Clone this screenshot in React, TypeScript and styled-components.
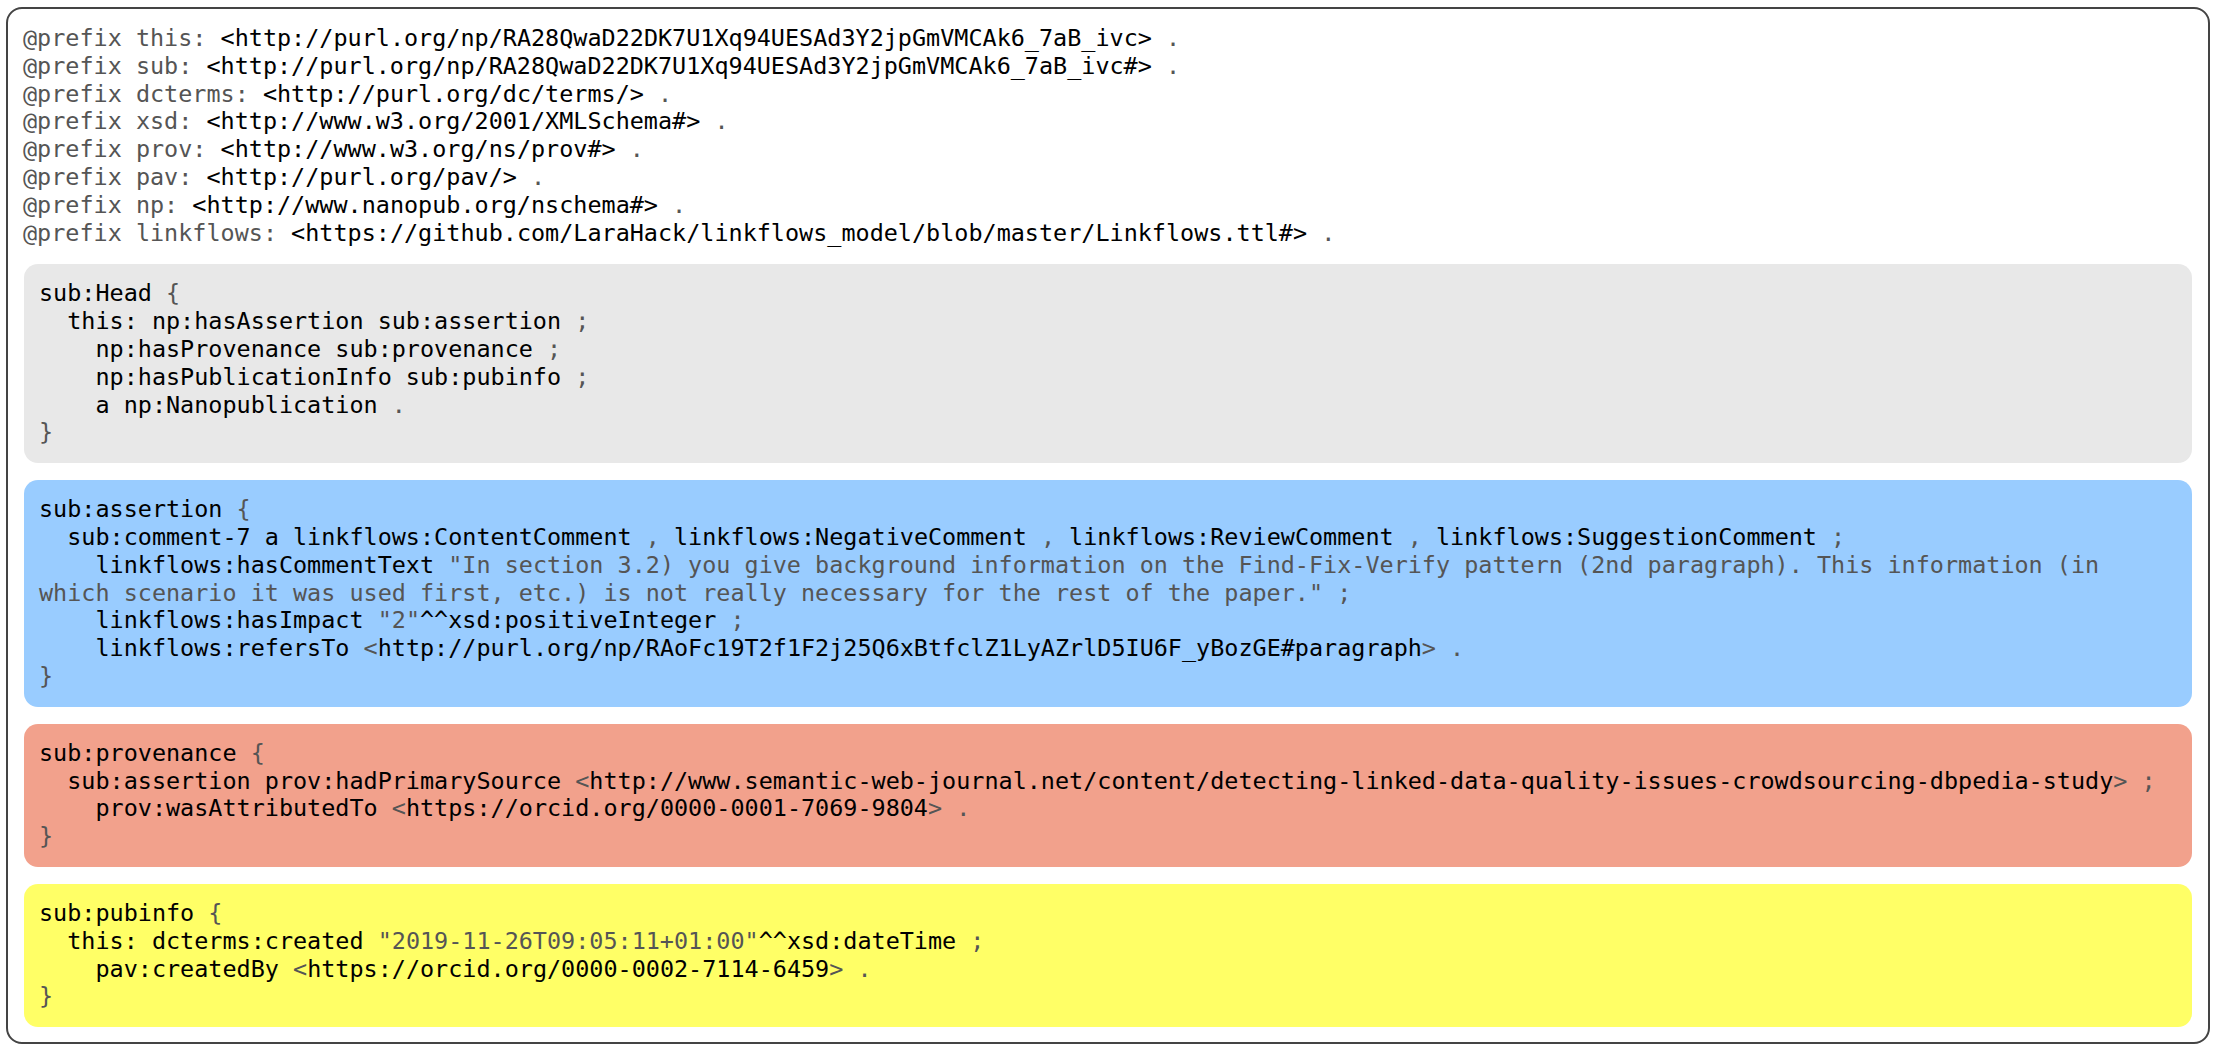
import React from "react";
import styled, { createGlobalStyle } from "styled-components";

const GlobalStyle = createGlobalStyle`
  html, body {
    margin: 0;
    padding: 0;
    background: #ffffff;
  }
  body {
    font-family: "DejaVu Sans Mono", "Liberation Mono", monospace;
  }
`;

const Frame = styled.div`
  margin: 7px 6px 6px 6px;
  border: 2px solid #444444;
  border-radius: 16px;
  padding: 16px 16px 15px 15px;
  background: #ffffff;
  display: flex;
  flex-direction: column;
  gap: 17px;
`;

const Code = styled.pre`
  margin: 0;
  font-family: "DejaVu Sans Mono", "Liberation Mono", monospace;
  font-size: 23.45px;
  line-height: 27.8px;
  color: #000000;
  white-space: pre;
`;

const Graph = styled.div<{ $bg: string }>`
  background: ${(p) => p.$bg};
  border-radius: 14px;
  padding: 16px 16px 16px 15px;
  margin-left: 1px;
`;

const Muted = styled.span`
  color: #555555;
`;

type Block = { bg: string; lines: string[] };

const prefixLines = [
  "§@prefix this: §<http://purl.org/np/RA28QwaD22DK7U1Xq94UESAd3Y2jpGmVMCAk6_7aB_ivc>§ .§",
  "§@prefix sub: §<http://purl.org/np/RA28QwaD22DK7U1Xq94UESAd3Y2jpGmVMCAk6_7aB_ivc#>§ .§",
  "§@prefix dcterms: §<http://purl.org/dc/terms/>§ .§",
  "§@prefix xsd: §<http://www.w3.org/2001/XMLSchema#>§ .§",
  "§@prefix prov: §<http://www.w3.org/ns/prov#>§ .§",
  "§@prefix pav: §<http://purl.org/pav/>§ .§",
  "§@prefix np: §<http://www.nanopub.org/nschema#>§ .§",
  "§@prefix linkflows: §<https://github.com/LaraHack/linkflows_model/blob/master/Linkflows.ttl#>§ .§",
];

const blocks: Block[] = [
  {
    bg: "#e8e8e8",
    lines: [
      "sub:Head §{§",
      "  this: np:hasAssertion sub:assertion §;§",
      "    np:hasProvenance sub:provenance §;§",
      "    np:hasPublicationInfo sub:pubinfo §;§",
      "    a np:Nanopublication §.§",
      "§}§",
    ],
  },
  {
    bg: "#99ccff",
    lines: [
      "sub:assertion §{§",
      "  sub:comment-7 a linkflows:ContentComment §, §linkflows:NegativeComment §, §linkflows:ReviewComment §, §linkflows:SuggestionComment §;§",
      '    linkflows:hasCommentText §"In section 3.2) you give background information on the Find-Fix-Verify pattern (2nd paragraph). This information (in§',
      '§which scenario it was used first, etc.) is not really necessary for the rest of the paper." ;§',
      '    linkflows:hasImpact §"2"§^^xsd:positiveInteger §;§',
      "    linkflows:refersTo §<§http://purl.org/np/RAoFc19T2f1F2j25Q6xBtfclZ1LyAZrlD5IU6F_yBozGE#paragraph§> .§",
      "§}§",
    ],
  },
  {
    bg: "#f2a18c",
    lines: [
      "sub:provenance §{§",
      "  sub:assertion prov:hadPrimarySource §<§http://www.semantic-web-journal.net/content/detecting-linked-data-quality-issues-crowdsourcing-dbpedia-study§> ;§",
      "    prov:wasAttributedTo §<§https://orcid.org/0000-0001-7069-9804§> .§",
      "§}§",
    ],
  },
  {
    bg: "#ffff66",
    lines: [
      "sub:pubinfo §{§",
      '  this: dcterms:created §"2019-11-26T09:05:11+01:00"§^^xsd:dateTime §;§',
      "    pav:createdBy §<§https://orcid.org/0000-0002-7114-6459§> .§",
      "§}§",
    ],
  },
];

function Line({ text }: { text: string }) {
  const parts = text.split("§");
  return (
    <>
      {parts.map((p, i) =>
        p === "" ? null : i % 2 === 1 ? <Muted key={i}>{p}</Muted> : <React.Fragment key={i}>{p}</React.Fragment>
      )}
      {"\n"}
    </>
  );
}

function CodeLines({ lines }: { lines: string[] }) {
  return (
    <Code>
      {lines.map((l, i) => (
        <Line key={i} text={l} />
      ))}
    </Code>
  );
}

export default function App() {
  return (
    <>
      <GlobalStyle />
      <Frame>
        <CodeLines lines={prefixLines} />
        {blocks.map((b, i) => (
          <Graph key={i} $bg={b.bg}>
            <CodeLines lines={b.lines} />
          </Graph>
        ))}
      </Frame>
    </>
  );
}
